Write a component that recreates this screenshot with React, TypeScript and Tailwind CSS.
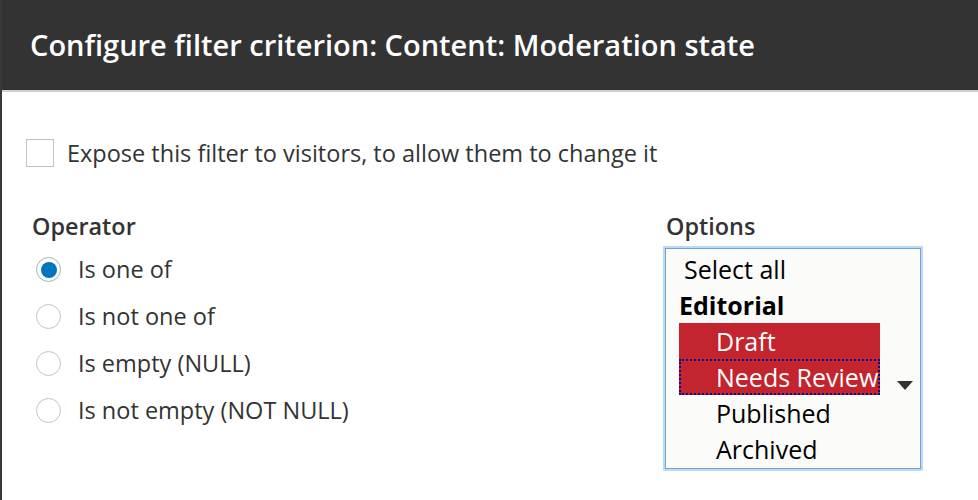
const operators = ['Is one of', 'Is not one of', 'Is empty (NULL)', 'Is not empty (NOT NULL)'];

function Radio({ checked }: { checked?: boolean }) {
  if (checked) {
    return (
      <span className="flex h-[25px] w-[25px] items-center justify-center rounded-full border border-[#8fb4d9] bg-white">
        <span className="h-[16px] w-[16px] rounded-full bg-[#0074bd]" />
      </span>
    );
  }
  return <span className="h-[25px] w-[25px] rounded-full border border-[#c4c4c4] bg-white" />;
}

export default function App() {
  return (
    <main className="min-h-[500px] border-l-2 border-[#383838] bg-white font-['Open_Sans',sans-serif] text-[#333]">
      {/* Dialog title */}
      <header className="flex h-[92px] items-center border-b-2 border-[#d0d0d0] bg-[#333] pl-[28px]">
        <h1 className="text-[29px] font-semibold text-white">
          Configure filter criterion: Content: Moderation state
        </h1>
      </header>

      <div className="pl-[24px] pt-[45px]">
        <label className="flex items-center gap-[13px]">
          <span className="h-[28px] w-[28px] border border-[#c2c2c2] bg-white" />
          <span className="text-[23.5px] leading-[32px]">Expose this filter to visitors, to allow them to change it</span>
        </label>

        <div className="mt-[41px] flex">
          {/* Operator */}
          <div className="w-[637px] pl-[6px]">
            <div className="text-[23.4px] font-semibold leading-[32px]">Operator</div>
            <div className="mt-[4px] flex flex-col">
              {operators.map((op, i) => (
                <div key={op} className="flex h-[47px] items-center gap-[17px] pl-[4px]">
                  <Radio checked={i === 0} />
                  <span className="text-[23.5px]">{op}</span>
                </div>
              ))}
            </div>
          </div>

          {/* Options */}
          <div>
            <div className="pl-[3px] text-[23.4px] font-semibold leading-[32px]">Options</div>
            <div className="mt-[4px] w-[260px] rounded-[1px] border-2 border-[#bcdaf7]">
              <div className="relative h-[221px] overflow-hidden border border-[#6fa3d3] bg-[#fbfbfa] pt-[2px] text-[25px] leading-[36px] text-black">
                <div className="pl-[18px]">Select all</div>
                <div className="pl-[13px] font-bold">Editorial</div>
                <div className="ml-[13px] w-[201px] overflow-hidden whitespace-nowrap bg-[#c3242d] pl-[37px] text-white">
                  Draft
                </div>
                <div className="ml-[13px] w-[201px] overflow-hidden whitespace-nowrap bg-[#c3242d] pl-[37px] text-white outline-2 outline-dotted -outline-offset-2 outline-[#0b0b8a]">
                  Needs Review
                </div>
                <div className="pl-[50px]">Published</div>
                <div className="pl-[50px]">Archived</div>
                <svg className="absolute left-[231px] top-[132px]" width="16" height="10" viewBox="0 0 16 10">
                  <path d="M0 0 L16 0 L8 9 Z" fill="#333" />
                </svg>
              </div>
            </div>
          </div>
        </div>
      </div>
    </main>
  );
}
